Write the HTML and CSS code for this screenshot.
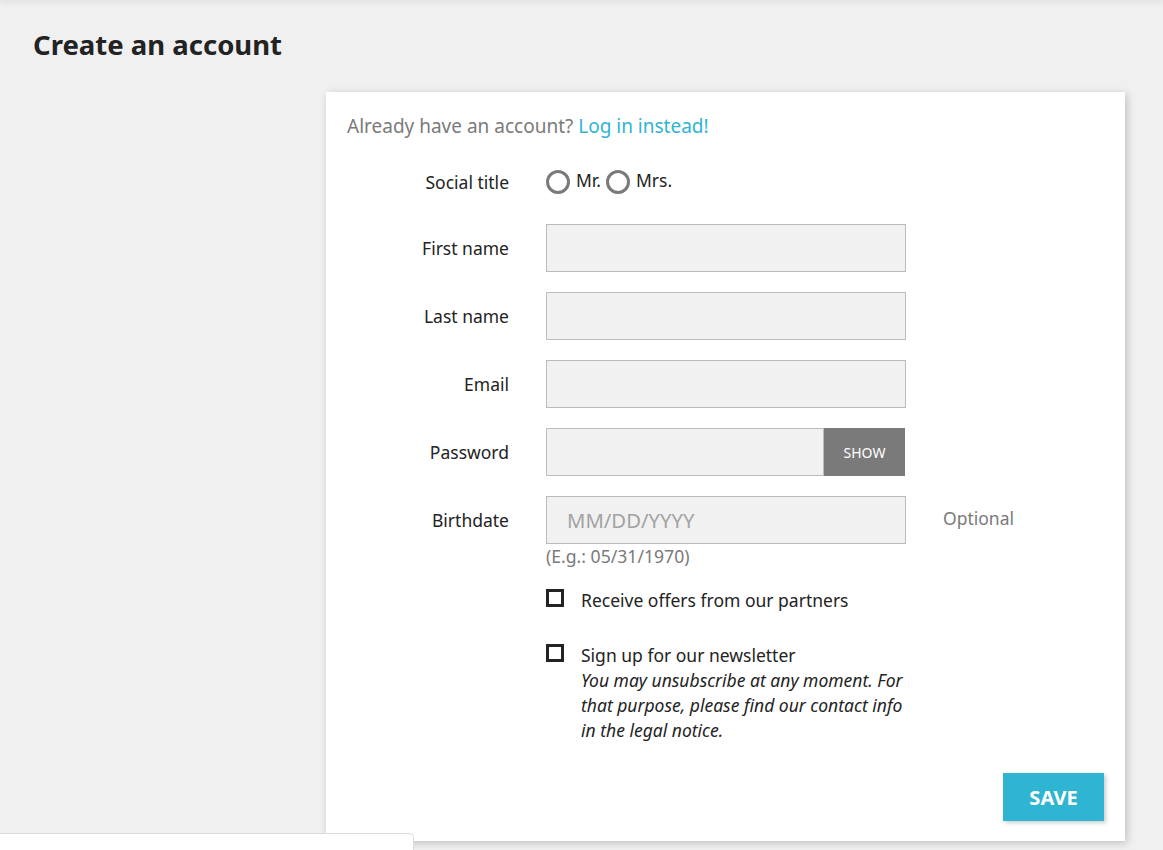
FILE: index.html
```html
<!DOCTYPE html>
<html lang="en">
<head>
<meta charset="utf-8">
<title>Create an account</title>
<link rel="stylesheet" href="styles.css">
</head>
<body>
<div class="topshade"></div>
<main class="page">
  <h1 class="page-title">Create an account</h1>
  <section class="card">
    <p class="already">Already have an account? <a href="#" class="link">Log in instead!</a></p>
    <form class="form">
      <div class="row row-radio">
        <label class="lbl">Social title</label>
        <div class="radios">
          <label class="radio"><span class="circle"></span>Mr.</label>
          <label class="radio"><span class="circle"></span>Mrs.</label>
        </div>
      </div>
      <div class="row">
        <label class="lbl">First name</label>
        <div class="field"><input class="input" type="text"></div>
      </div>
      <div class="row">
        <label class="lbl">Last name</label>
        <div class="field"><input class="input" type="text"></div>
      </div>
      <div class="row">
        <label class="lbl">Email</label>
        <div class="field"><input class="input" type="text"></div>
      </div>
      <div class="row">
        <label class="lbl">Password</label>
        <div class="field group">
          <input class="input pw" type="password">
          <button type="button" class="show">SHOW</button>
        </div>
      </div>
      <div class="row row-birth">
        <label class="lbl">Birthdate</label>
        <div class="field">
          <input class="input date" type="text" placeholder="MM/DD/YYYY">
          <div class="hint">(E.g.: 05/31/1970)</div>
        </div>
        <div class="optional">Optional</div>
      </div>
      <div class="check-row first">
        <span class="box"></span>
        <div class="check-text">Receive offers from our partners</div>
      </div>
      <div class="check-row">
        <span class="box"></span>
        <div class="check-text">Sign up for our newsletter<br><em>You may unsubscribe at any moment. For that purpose, please find our contact info in the legal notice.</em></div>
      </div>
      <div class="actions">
        <button type="button" class="save">SAVE</button>
      </div>
    </form>
  </section>
</main>
<div class="bottom-tab"></div>
</body>
</html>
```
FILE: styles.css
```css
* { box-sizing: border-box; }
html, body { margin: 0; padding: 0; }
body {
  background: #f0f0f0;
  font-family: "Noto Sans", "Open Sans", sans-serif;
  font-size: 16px;
  color: #232323;
  height: 850px;
  overflow: hidden;
  position: relative;
}
.topshade {
  height: 0;
  box-shadow: 0 0 6px 1px rgba(0,0,0,0.18);
}
.page { padding: 0 0 0 33px; }
.page-title {
  margin: 0;
  padding-top: 29px;
  font-size: 27.5px;
  line-height: 32px;
  font-weight: 700;
  color: #232323;
}
.card {
  margin: 31px 0 0 293px;
  width: 799px;
  height: 749px;
  background: #fff;
  box-shadow: 2px 2px 8px 0 rgba(0,0,0,0.2);
  padding: 22px 21px 20px 21px;
}
.already {
  margin: 0;
  line-height: 24px;
  color: #7a7a7a;
  font-size: 19px;
}
.link { color: #2fb5d2; text-decoration: none; }
.form { margin-top: 19px; }
.row {
  display: grid;
  grid-template-columns: 162px 360px auto;
  column-gap: 37px;
  align-items: center;
  margin-bottom: 20px;
  min-height: 48px;
}
.lbl { text-align: right; font-size: 17.5px; line-height: 24px; }
.row-radio { margin-bottom: 19px; }
.row-radio .lbl { margin-top: 2px; }
.radios { display: flex; align-items: center; gap: 5px; }
.radio { display: flex; align-items: center; font-size: 17.5px; gap: 6px; margin-top: -2px; }
.circle {
  width: 24px; height: 24px;
  border: 3px solid #7a7a7a;
  border-radius: 50%;
  display: inline-block;
  margin-top: 3px;
}
.field { display: block; }
.input {
  display: block;
  width: 360px;
  height: 48px;
  background: #f1f1f1;
  border: 1px solid #bcbcbc;
  font-family: inherit;
  font-size: 16px;
  color: #7a7a7a;
  padding: 0 20px;
  outline: none;
  margin: 0;
}
.group { display: flex; }
.pw { width: 278px; }
.show {
  width: 81px;
  height: 48px;
  border: 0;
  background: #7a7a7a;
  color: #fff;
  font-family: inherit;
  font-size: 14px;
  padding: 0;
}
.date { font-size: 20.3px; }
.date::placeholder { color: #a3a3a3; }
.row-birth { align-items: start; }
.row-birth .lbl { margin-top: 12px; }
.hint { color: #7a7a7a; font-size: 17.6px; line-height: 24px; }
.optional { color: #7a7a7a; font-size: 17.5px; line-height: 24px; margin-top: 10px; }
.check-row {
  display: flex;
  margin-left: 199px;
  gap: 17px;
  margin-top: 30px;
}
.check-row.first { margin-top: 18px; }
.box {
  flex: none;
  width: 18px; height: 18px;
  border: 3px solid #232323;
  margin-top: 1px;
}
.check-text { font-size: 17.5px; line-height: 25px; width: 330px; }
.check-text em { font-style: italic; }
.actions { display: flex; justify-content: flex-end; margin-top: 30px; }
.save {
  width: 101px; height: 48px;
  background: #2fb5d2;
  color: #fff;
  border: 0;
  font-family: inherit;
  font-weight: 700;
  font-size: 20px;
  box-shadow: 2px 2px 4px 0 rgba(0,0,0,0.2);
}
.bottom-tab {
  position: absolute;
  left: 0; top: 833px;
  width: 414px; height: 30px;
  background: #fff;
  border-top: 1px solid #dcdcdc;
  border-right: 1px solid #dcdcdc;
  border-top-right-radius: 5px;
}
```
